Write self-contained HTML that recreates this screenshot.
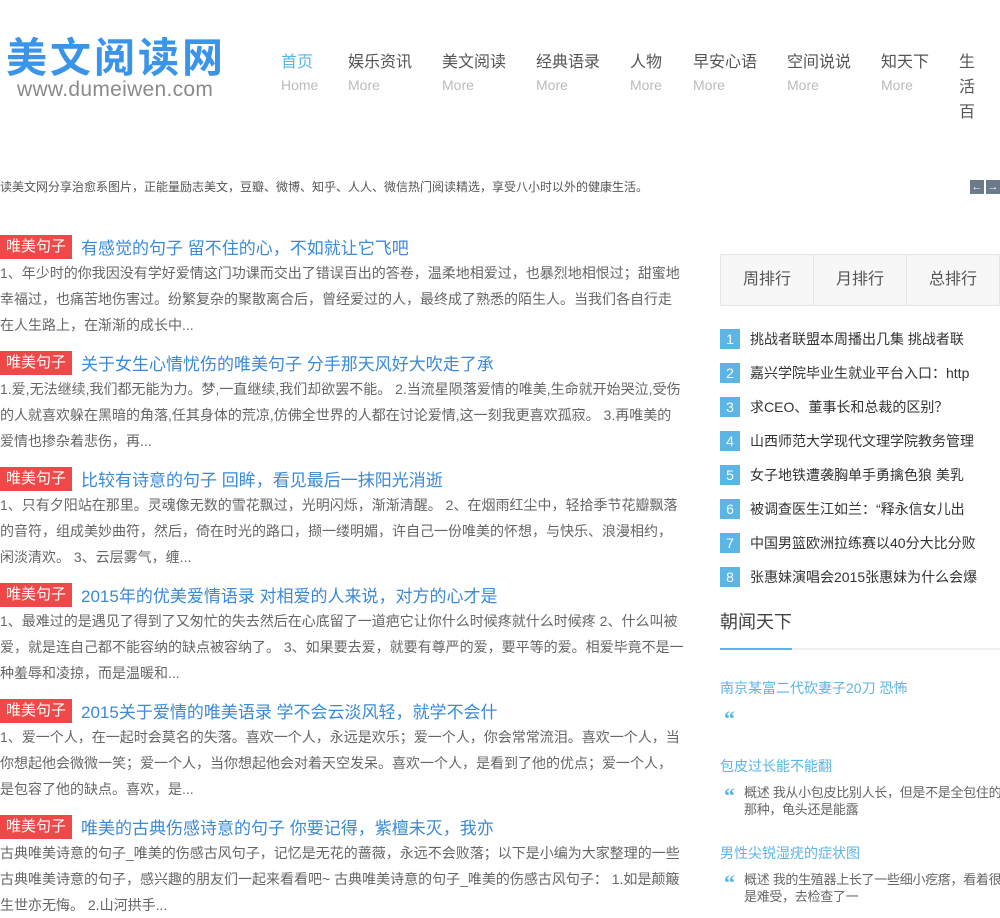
<!DOCTYPE html>
<html><head><meta charset="utf-8"><style>
*{margin:0;padding:0;box-sizing:border-box}
body{width:1000px;height:909px;overflow:hidden;background:#fff;font-family:"Liberation Sans","Noto Sans CJK SC",sans-serif;color:#555;position:relative}
.a{position:absolute}
.logo{left:6px;top:33px;font-size:41px;font-weight:bold;color:#3a94ea;letter-spacing:3px;line-height:50px}
.url{left:17px;top:78px;font-size:21px;color:#8a8a8a;letter-spacing:0.3px}
.nav{top:53px;font-size:16px;color:#555;line-height:20px}
.nav span{display:block;font-size:14px;color:#bbb;margin-top:2px}
.desc{left:0;top:178px;font-size:12px;color:#555}
.arr{top:180px;width:14px;height:14px;background:#6b7b8a;color:#fff;font-size:11px;line-height:14px;text-align:center}
.art{left:0;width:685px}
.tag{display:inline-block;background:#f04848;color:#fff;font-size:15px;padding:0 6px;height:24px;line-height:24px;vertical-align:middle}
.tt{font-size:17px;color:#3a8ad8;margin-left:9px;vertical-align:middle}
.body{font-size:14px;color:#666;line-height:26px;margin-top:1px}
.tabs{left:720px;top:254px;width:279px;height:52px;display:flex}
.tabs div{flex:1;border:1px solid #e5e5e5;background:#f7f7f7;font-size:16px;color:#555;text-align:center;line-height:50px;margin-right:-1px}
.rk{left:720px;font-size:14px;color:#333;white-space:nowrap;width:280px;overflow:hidden;line-height:20px}
.rk b{display:inline-block;width:20px;height:20px;background:#5bb6e5;color:#fff;font-weight:normal;text-align:center;margin-right:10px}
.nw{left:720px;font-size:14px;color:#5bb6e5}
.q{left:724px;font-size:22px;color:#5bb6e5;font-weight:bold;font-family:"Liberation Serif",serif}
.sm{left:744px;width:262px;font-size:13px;color:#666;line-height:17px;letter-spacing:-0.3px}
</style></head><body>
<div class="a logo">美文阅读网</div>
<div class="a url">www.dumeiwen.com</div>
<div class="a nav" style="left:281px;color:#5bb6e5">首页<span>Home</span></div>
<div class="a nav" style="left:348px">娱乐资讯<span>More</span></div>
<div class="a nav" style="left:442px">美文阅读<span>More</span></div>
<div class="a nav" style="left:536px">经典语录<span>More</span></div>
<div class="a nav" style="left:630px">人物<span>More</span></div>
<div class="a nav" style="left:693px">早安心语<span>More</span></div>
<div class="a nav" style="left:787px">空间说说<span>More</span></div>
<div class="a nav" style="left:881px">知天下<span>More</span></div>
<div class="a nav" style="left:959px;width:18px;line-height:25px;top:50px">生活百</div>
<div class="a desc">读美文网分享治愈系图片，正能量励志美文，豆瓣、微博、知乎、人人、微信热门阅读精选，享受八小时以外的健康生活。</div>
<div class="a arr" style="left:970px">←</div><div class="a arr" style="left:986px">→</div>

<div class="a art" style="top:234px"><span class="tag">唯美句子</span><span class="tt">有感觉的句子 留不住的心，不如就让它飞吧</span><div class="body">1、年少时的你我因没有学好爱情这门功课而交出了错误百出的答卷，温柔地相爱过，也暴烈地相恨过；甜蜜地幸福过，也痛苦地伤害过。纷繁复杂的聚散离合后，曾经爱过的人，最终成了熟悉的陌生人。当我们各自行走在人生路上，在渐渐的成长中...</div></div>
<div class="a art" style="top:350px"><span class="tag">唯美句子</span><span class="tt">关于女生心情忧伤的唯美句子 分手那天风好大吹走了承</span><div class="body">1.爱,无法继续,我们都无能为力。梦,一直继续,我们却欲罢不能。 2.当流星陨落爱情的唯美,生命就开始哭泣,受伤的人就喜欢躲在黑暗的角落,任其身体的荒凉,仿佛全世界的人都在讨论爱情,这一刻我更喜欢孤寂。 3.再唯美的爱情也掺杂着悲伤，再...</div></div>
<div class="a art" style="top:466px"><span class="tag">唯美句子</span><span class="tt">比较有诗意的句子 回眸，看见最后一抹阳光消逝</span><div class="body">1、只有夕阳站在那里。灵魂像无数的雪花飘过，光明闪烁，渐渐清醒。 2、在烟雨红尘中，轻拾季节花瓣飘落的音符，组成美妙曲符，然后，倚在时光的路口，撷一缕明媚，许自己一份唯美的怀想，与快乐、浪漫相约，闲淡清欢。 3、云层雾气，缠...</div></div>
<div class="a art" style="top:582px"><span class="tag">唯美句子</span><span class="tt">2015年的优美爱情语录 对相爱的人来说，对方的心才是</span><div class="body">1、最难过的是遇见了得到了又匆忙的失去然后在心底留了一道疤它让你什么时候疼就什么时候疼 2、什么叫被爱，就是连自己都不能容纳的缺点被容纳了。 3、如果要去爱，就要有尊严的爱，要平等的爱。相爱毕竟不是一种羞辱和凌掠，而是温暖和...</div></div>
<div class="a art" style="top:698px"><span class="tag">唯美句子</span><span class="tt">2015关于爱情的唯美语录 学不会云淡风轻，就学不会什</span><div class="body">1、爱一个人，在一起时会莫名的失落。喜欢一个人，永远是欢乐；爱一个人，你会常常流泪。喜欢一个人，当你想起他会微微一笑；爱一个人，当你想起他会对着天空发呆。喜欢一个人，是看到了他的优点；爱一个人，是包容了他的缺点。喜欢，是...</div></div>
<div class="a art" style="top:814px"><span class="tag">唯美句子</span><span class="tt">唯美的古典伤感诗意的句子 你要记得，紫檀未灭，我亦</span><div class="body">古典唯美诗意的句子_唯美的伤感古风句子，记忆是无花的蔷薇，永远不会败落；以下是小编为大家整理的一些古典唯美诗意的句子，感兴趣的朋友们一起来看看吧~ 古典唯美诗意的句子_唯美的伤感古风句子： 1.如是颠簸生世亦无悔。 2.山河拱手...</div></div>

<div class="a tabs"><div>周排行</div><div>月排行</div><div>总排行</div></div>
<div class="a rk" style="top:329px"><b>1</b>挑战者联盟本周播出几集 挑战者联</div>
<div class="a rk" style="top:363px"><b>2</b>嘉兴学院毕业生就业平台入口：http</div>
<div class="a rk" style="top:397px"><b>3</b>求CEO、董事长和总裁的区别？</div>
<div class="a rk" style="top:431px"><b>4</b>山西师范大学现代文理学院教务管理</div>
<div class="a rk" style="top:465px"><b>5</b>女子地铁遭袭胸单手勇擒色狼 美乳</div>
<div class="a rk" style="top:499px"><b>6</b>被调查医生江如兰：“释永信女儿出</div>
<div class="a rk" style="top:533px"><b>7</b>中国男篮欧洲拉练赛以40分大比分败</div>
<div class="a rk" style="top:567px"><b>8</b>张惠妹演唱会2015张惠妹为什么会爆</div>
<div class="a" style="left:720px;top:608px;font-size:18px;color:#444">朝闻天下</div>
<div class="a" style="left:720px;top:648px;width:280px;height:2px;background:#eee"></div>
<div class="a" style="left:720px;top:648px;width:72px;height:2px;background:#5bb6e5"></div>
<div class="a nw" style="top:678px">南京某富二代砍妻子20刀 恐怖</div>
<div class="a q" style="top:706px">“</div>
<div class="a nw" style="top:756px">包皮过长能不能翻</div>
<div class="a q" style="top:783px">“</div>
<div class="a sm" style="top:784px">概述 我从小包皮比别人长，但是不是全包住的那种，龟头还是能露</div>
<div class="a nw" style="top:843px">男性尖锐湿疣的症状图</div>
<div class="a q" style="top:870px">“</div>
<div class="a sm" style="top:871px">概述 我的生殖器上长了一些细小疙瘩，看着很是难受，去检查了一</div>
</body></html>
